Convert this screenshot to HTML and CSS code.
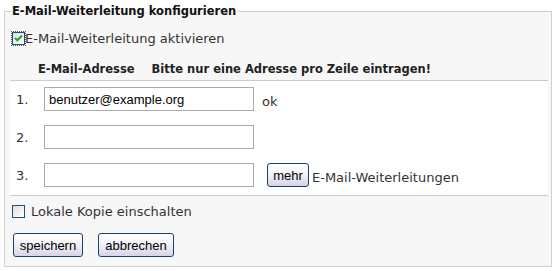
FILE: index.html
```html
<!DOCTYPE html>
<html lang="de">
<head>
<meta charset="utf-8">
<title>E-Mail-Weiterleitung</title>
<link rel="stylesheet" href="styles.css">
</head>
<body>
<form class="page">
  <fieldset class="box">
    <legend class="box-title">E-Mail-Weiterleitung konfigurieren</legend>
    <label class="check-row check-row--top">
      <input type="checkbox" class="xp-check xp-check--focus" checked>
      <span>E-Mail-Weiterleitung aktivieren</span>
    </label>
    <div class="list-head">
      <span class="list-head__addr">E-Mail-Adresse</span>
      <span class="list-head__hint">Bitte nur eine Adresse pro Zeile eintragen!</span>
    </div>
    <div class="list">
      <div class="list-row">
        <span class="list-row__num">1.</span>
        <input class="xp-input" type="text" value="benutzer@example.org">
        <span class="list-row__ok">ok</span>
      </div>
      <div class="list-row">
        <span class="list-row__num">2.</span>
        <input class="xp-input" type="text" value="">
      </div>
      <div class="list-row">
        <span class="list-row__num">3.</span>
        <input class="xp-input" type="text" value="">
        <button type="button" class="xp-btn xp-btn--more">mehr</button>
        <span class="list-row__more">E-Mail-Weiterleitungen</span>
      </div>
    </div>
    <label class="check-row check-row--bottom">
      <input type="checkbox" class="xp-check">
      <span class="check-row__text">Lokale Kopie einschalten</span>
    </label>
    <div class="actions">
      <button type="button" class="xp-btn xp-btn--save">speichern</button>
      <button type="button" class="xp-btn xp-btn--cancel">abbrechen</button>
    </div>
  </fieldset>
</form>
</body>
</html>
```
FILE: styles.css
```css
html, body {
  margin: 0;
  padding: 0;
  background: #ffffff;
}

body {
  font-family: "DejaVu Sans", Verdana, sans-serif;
  font-size: 13px;
  color: #333333;
}

.page {
  padding: 4px 5px 0 4px;
}

.box {
  margin: 0;
  padding: 0 3px 12px 5px;
  border: 1px solid #d0d0d0;
  background: #f7f7f7;
  min-inline-size: 0;
  height: 263px;
  box-sizing: border-box;
}

.box-title {
  padding: 0 2px 0 1px;
  margin-left: 1px;
  font-size: 11.5px;
  font-weight: bold;
  line-height: 14px;
  color: #111111;
}

.check-row {
  display: flex;
  align-items: center;
  height: 16px;
  color: #333333;
}

.check-row--top {
  margin-top: 12px;
  padding-left: 2px;
}

.check-row--bottom {
  margin-top: 7px;
  padding-left: 2px;
}

.check-row__text {
  margin-left: 6px;
}

.xp-check {
  -webkit-appearance: none;
  appearance: none;
  width: 13px;
  height: 13px;
  margin: 0;
  box-sizing: border-box;
  border: 1px solid #1c5180;
  background: linear-gradient(135deg, #dcdcd7 0%, #f4f4f1 60%, #ffffff 100%);
  flex: none;
}

.xp-check:checked {
  background-image:
    url("data:image/svg+xml,%3Csvg xmlns='http://www.w3.org/2000/svg' width='11' height='11' viewBox='0 0 11 11'%3E%3Cpath d='M2 5 L4.3 7.3 L9 2.6' fill='none' stroke='%2321a121' stroke-width='2'/%3E%3C/svg%3E"),
    linear-gradient(135deg, #dcdcd7 0%, #f4f4f1 60%, #ffffff 100%);
  background-repeat: no-repeat;
  background-position: center;
}

.xp-check--focus {
  outline: 1px dotted #555555;
  outline-offset: 0;
}

.list-head {
  display: flex;
  margin-top: 16px;
  height: 14px;
  line-height: 14px;
  font-size: 11.5px;
  font-weight: bold;
  color: #222222;
}

.list-head__addr {
  margin-left: 28px;
}

.list-head__hint {
  margin-left: 17px;
}

.list {
  margin-top: 4px;
  background: #ffffff;
  border-top: 1px solid #cccccc;
  border-bottom: 1px solid #cccccc;
  padding: 6px 0 8px;
  display: flex;
  flex-direction: column;
  gap: 14px;
}

.list-row {
  display: flex;
  align-items: center;
  height: 24px;
}

.list-row__num {
  width: 34px;
  padding-left: 6px;
  box-sizing: border-box;
  flex: none;
  color: #333333;
}

.xp-input {
  width: 210px;
  height: 24px;
  box-sizing: border-box;
  margin: 0;
  border: 1px solid #a5acb2;
  padding: 0 4px;
  font-family: "Liberation Sans", Arial, sans-serif;
  font-size: 13px;
  color: #000000;
  background: #ffffff;
  outline: none;
  flex: none;
}

.list-row__ok {
  margin-left: 8px;
  padding-top: 4px;
}

.xp-btn {
  height: 24px;
  box-sizing: border-box;
  margin: 0;
  padding: 0 5px;
  border: 1px solid #1c3f6e;
  border-radius: 3px;
  background: linear-gradient(180deg, #ffffff 0%, #f3f2f8 45%, #d6d3e6 100%);
  font-family: "Liberation Sans", Arial, sans-serif;
  font-size: 13px;
  color: #000000;
  cursor: pointer;
}

.xp-btn--more {
  margin-left: 13px;
  width: 42px;
  padding: 0;
}

.list-row__more {
  margin-left: 3px;
  padding-top: 4px;
}

.actions {
  display: flex;
  gap: 15px;
  margin-top: 14px;
  padding-left: 3px;
}

.xp-btn--save {
  width: 70px;
  padding: 0;
}

.xp-btn--cancel {
  width: 76px;
  padding: 0;
}
```
